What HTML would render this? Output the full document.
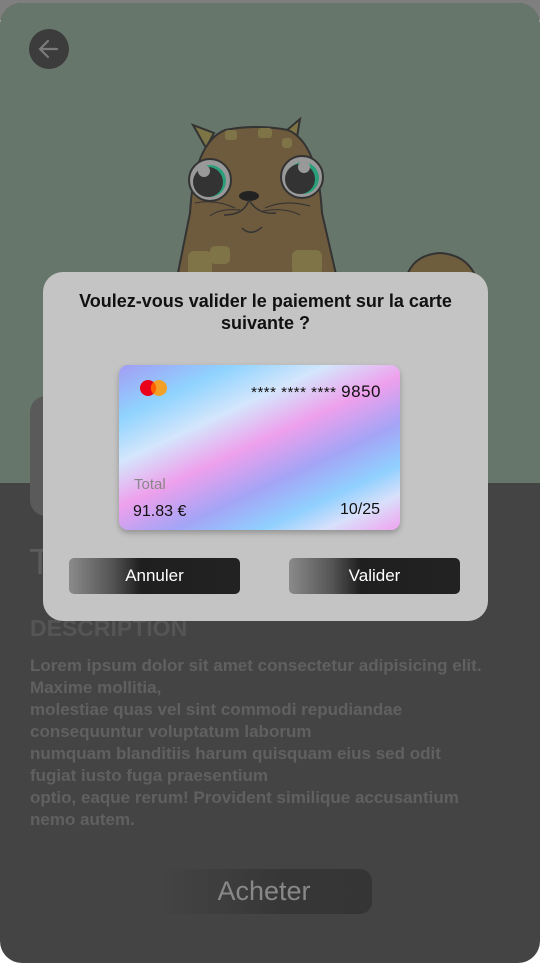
<!DOCTYPE html>
<html><head><meta charset="utf-8"><style>
*{margin:0;padding:0;box-sizing:border-box}
body{width:540px;height:963px;background:#fff;font-family:"Liberation Sans",sans-serif;position:relative;overflow:hidden}
.strip{position:absolute;left:0;top:0;width:540px;height:20px;background:#7f7f7f}
.wrap{position:absolute;left:0;top:3px;width:540px;height:960px;border-radius:22px;overflow:hidden;background:#444}
.green{position:absolute;left:0;top:0;width:540px;height:480px;background:#67766a}
.back{position:absolute;left:29px;top:26px;width:40px;height:40px;border-radius:50%;background:#3c3c3c}
.ghost{position:absolute;left:30px;top:393px;width:120px;height:120px;border-radius:16px;background:#5a5a5a}
.title{position:absolute;left:29px;top:538px;font-size:36px;color:#5c5c5c}
.desc{position:absolute;left:30px;top:612px;font-size:23px;font-weight:bold;color:#555}
.lorem{position:absolute;left:30px;top:652px;width:457px;font-size:17px;font-weight:bold;color:#606060;line-height:22px}
.buy{position:absolute;left:156px;top:866px;width:216px;height:45px;border-radius:12px;background:linear-gradient(90deg,#444 0%,#3e3e3e 30%,#363636 60%,#353535);color:#888;font-size:27px;text-align:center;line-height:45px}
.dlg{position:absolute;left:43px;top:272px;width:445px;height:349px;border-radius:20px;background:#c4c4c4}
.q{position:absolute;left:0;top:18px;width:445px;text-align:center;font-size:18px;font-weight:bold;color:#111;line-height:22px}
.card{position:absolute;left:76px;top:93px;width:281px;height:165px;border-radius:9px;overflow:hidden;
background:linear-gradient(155deg,#a39cf4 0%,#8fd3fe 18%,#d4e6fc 33%,#eea0ec 48%,#a4a4f6 64%,#90d0fe 78%,#d9e0fb 88%,#f0a2ef 100%);box-shadow:0 3px 6px rgba(0,0,0,.25)}
.num{position:absolute;right:19px;top:17px;font-size:15px;color:#111;letter-spacing:.5px}
.num b{font-size:17px;font-weight:normal}
.tot{position:absolute;left:15px;top:111px;font-size:15px;color:#888}
.amt{position:absolute;left:14px;top:138px;font-size:16px;color:#111}
.exp{position:absolute;right:20px;top:136px;font-size:16px;color:#111}
.btn{position:absolute;top:286px;width:171px;height:36px;border-radius:5px;background:linear-gradient(90deg,#8a8a8a 0%,#555 25%,#1f1f1f 42%,#222 100%);color:#fff;font-size:17px;text-align:center;line-height:36px}
</style></head><body>
<div class="strip"></div>
<div class="wrap">
<div class="green"></div>
<div class="back"><svg width="40" height="40"><path d="M28 20H12M19 12l-8 8 8 8" stroke="#7a7a7a" stroke-width="2.2" fill="none" stroke-linecap="round"/></svg></div>
<svg style="position:absolute;left:0;top:0" width="540" height="480">
<path d="M405 280 Q410 252 440 250 Q470 252 478 280Z" fill="#6e5e3e" stroke="#333" stroke-width="2"/>
<path d="M193 122 L206 145 L214 130 Z" fill="#7c7444" stroke="#333" stroke-width="2"/>
<path d="M300 116 L296 140 L286 128 Z" fill="#7c7444" stroke="#333" stroke-width="2"/>
<path d="M176 280 L190 210 Q194 140 225 127 Q256 121 288 127 Q318 140 322 210 L338 280 Z" fill="#6e5a3c" stroke="#333" stroke-width="2"/>
<rect x="225" y="127" width="12" height="10" rx="3" fill="#7f7448"/><rect x="258" y="125" width="14" height="10" rx="3" fill="#7f7448"/><rect x="282" y="135" width="10" height="10" rx="3" fill="#7f7448"/><rect x="188" y="248" width="24" height="25" rx="6" fill="#7f7448"/><rect x="292" y="247" width="30" height="25" rx="6" fill="#7f7448"/><rect x="210" y="243" width="20" height="18" rx="5" fill="#7f7448"/>
<circle cx="210" cy="177" r="21" fill="#999" stroke="#333" stroke-width="2"/><circle cx="210" cy="178" r="16" fill="#2aa07a"/><circle cx="208" cy="179" r="15" fill="#333"/><circle cx="204" cy="168" r="6" fill="#999"/>
<circle cx="302" cy="174" r="21" fill="#999" stroke="#333" stroke-width="2"/><circle cx="303" cy="175" r="16" fill="#2aa07a"/><circle cx="300" cy="176" r="15" fill="#333"/><circle cx="304" cy="164" r="6" fill="#999"/>
<ellipse cx="249" cy="193" rx="10" ry="5" fill="#222"/>
<path d="M249 197 Q244 212 224 212 M249 197 Q258 212 276 210 M242 225 Q251 234 262 224" stroke="#333" stroke-width="1.5" fill="none"/>
<path d="M195 200 Q215 196 235 205 M210 213 Q220 205 240 207 M265 205 Q285 196 310 203 M263 208 Q285 204 300 212" stroke="#333" stroke-width="1" fill="none"/>
</svg>
<div class="ghost"></div>
<div class="title">T</div>
<div class="desc">DESCRIPTION</div>
<div class="lorem">Lorem ipsum dolor sit amet consectetur adipisicing elit. Maxime mollitia,<br>molestiae quas vel sint commodi repudiandae consequuntur voluptatum laborum<br>numquam blanditiis harum quisquam eius sed odit fugiat iusto fuga praesentium<br>optio, eaque rerum! Provident similique accusantium nemo autem.</div>
<div class="buy">Acheter</div>
</div>
<div class="dlg">
<div class="q">Voulez-vous valider le paiement sur la carte<br>suivante ?</div>
<div class="card">
<svg style="position:absolute;left:19px;top:14px" width="32" height="20"><circle cx="10" cy="9" r="8" fill="#eb001b"/><circle cx="21" cy="9" r="8" fill="#f79e1b" opacity=".95"/><path d="M15.5 3a8 8 0 0 1 0 12a8 8 0 0 1 0-12z" fill="#ff5f00"/></svg>
<div class="num">**** **** **** <b>9850</b></div>
<div class="tot">Total</div>
<div class="amt">91.83 €</div>
<div class="exp">10/25</div>
</div>
<div class="btn" style="left:26px">Annuler</div>
<div class="btn" style="left:246px">Valider</div>
</div>
</body></html>
